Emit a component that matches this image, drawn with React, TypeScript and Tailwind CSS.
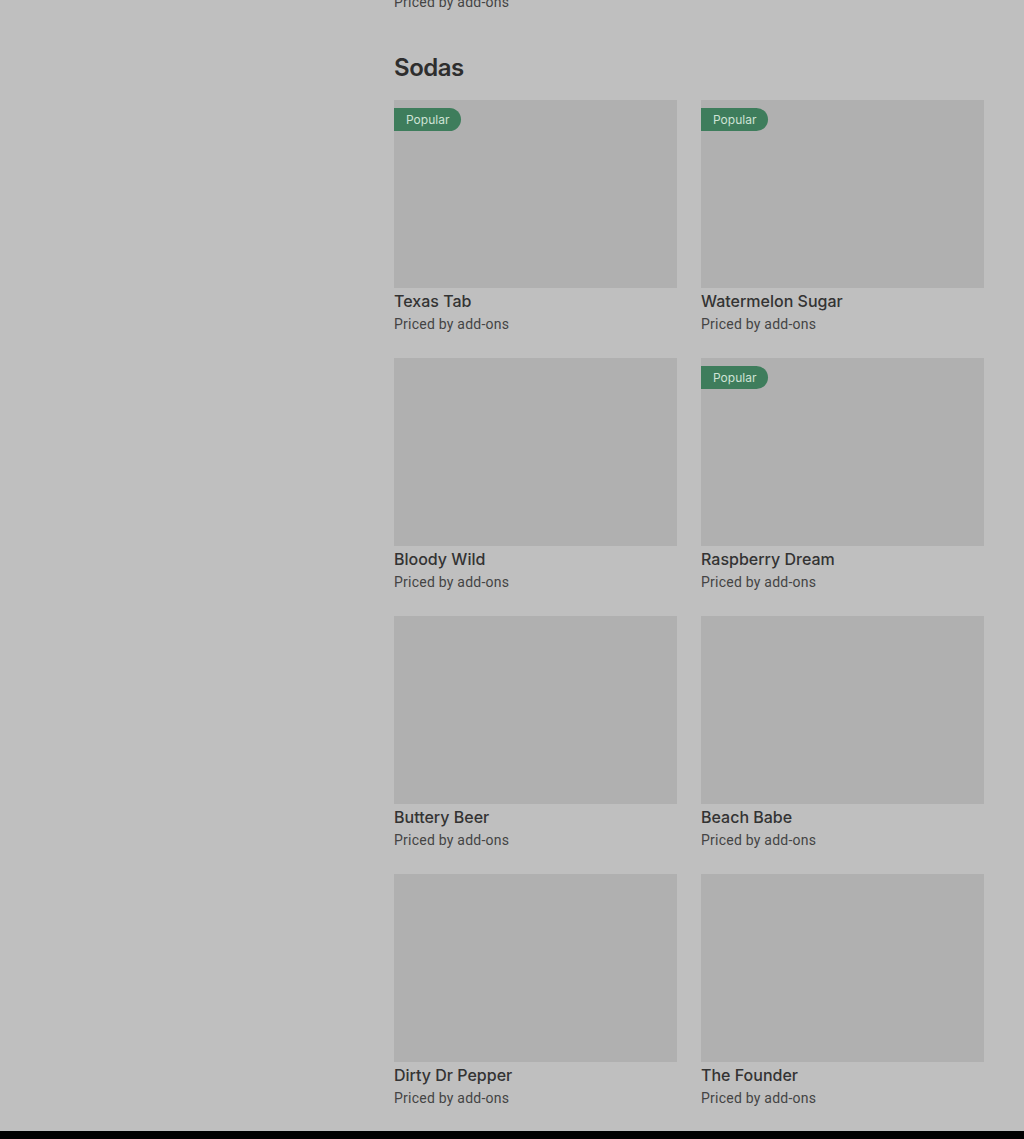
const items = [
  { name: "Texas Tab", popular: true },
  { name: "Watermelon Sugar", popular: true },
  { name: "Bloody Wild", popular: false },
  { name: "Raspberry Dream", popular: true },
  { name: "Buttery Beer", popular: false },
  { name: "Beach Babe", popular: false },
  { name: "Dirty Dr Pepper", popular: false },
  { name: "The Founder", popular: false },
];

function ItemCard({ name, popular }: { name: string; popular: boolean }) {
  return (
    <div className="flex flex-col">
      <div className="relative h-[188px] bg-[#b0b0b0]">
        {popular && (
          <span className="absolute left-0 top-2 flex h-[23px] items-center rounded-r-full bg-[#3e7d5c] pl-3 pr-3 text-[12px] text-[#cfe3d6]">
            Popular
          </span>
        )}
      </div>
      <div className="mt-px text-[16px] font-medium leading-6 text-[#333333]">{name}</div>
      <div className="mt-px font-['Roboto',sans-serif] text-[14px] leading-5 tracking-[0.017em] text-[#444444]">
        Priced by add-ons
      </div>
    </div>
  );
}

export default function App() {
  return (
    <div className="min-h-screen bg-[#bfbfbf] font-['Inter',sans-serif]">
      <div className="flex">
        <div className="w-[394px] shrink-0" />
        <div className="w-[590px] pb-[23px]">
          <div className="-mt-[8px] font-['Roboto',sans-serif] text-[14px] leading-5 tracking-[0.017em] text-[#444444]">
            Priced by add-ons
          </div>
          <h2 className="mt-[40px] mb-[16px] text-[24px] font-semibold leading-8 tracking-[-0.02em] text-[#2e2e2e]">
            Sodas
          </h2>
          <div className="grid grid-cols-2 gap-x-6 gap-y-6">
            {items.map((item) => (
              <ItemCard key={item.name} name={item.name} popular={item.popular} />
            ))}
          </div>
        </div>
      </div>
      <div className="h-2 bg-black" />
    </div>
  );
}
